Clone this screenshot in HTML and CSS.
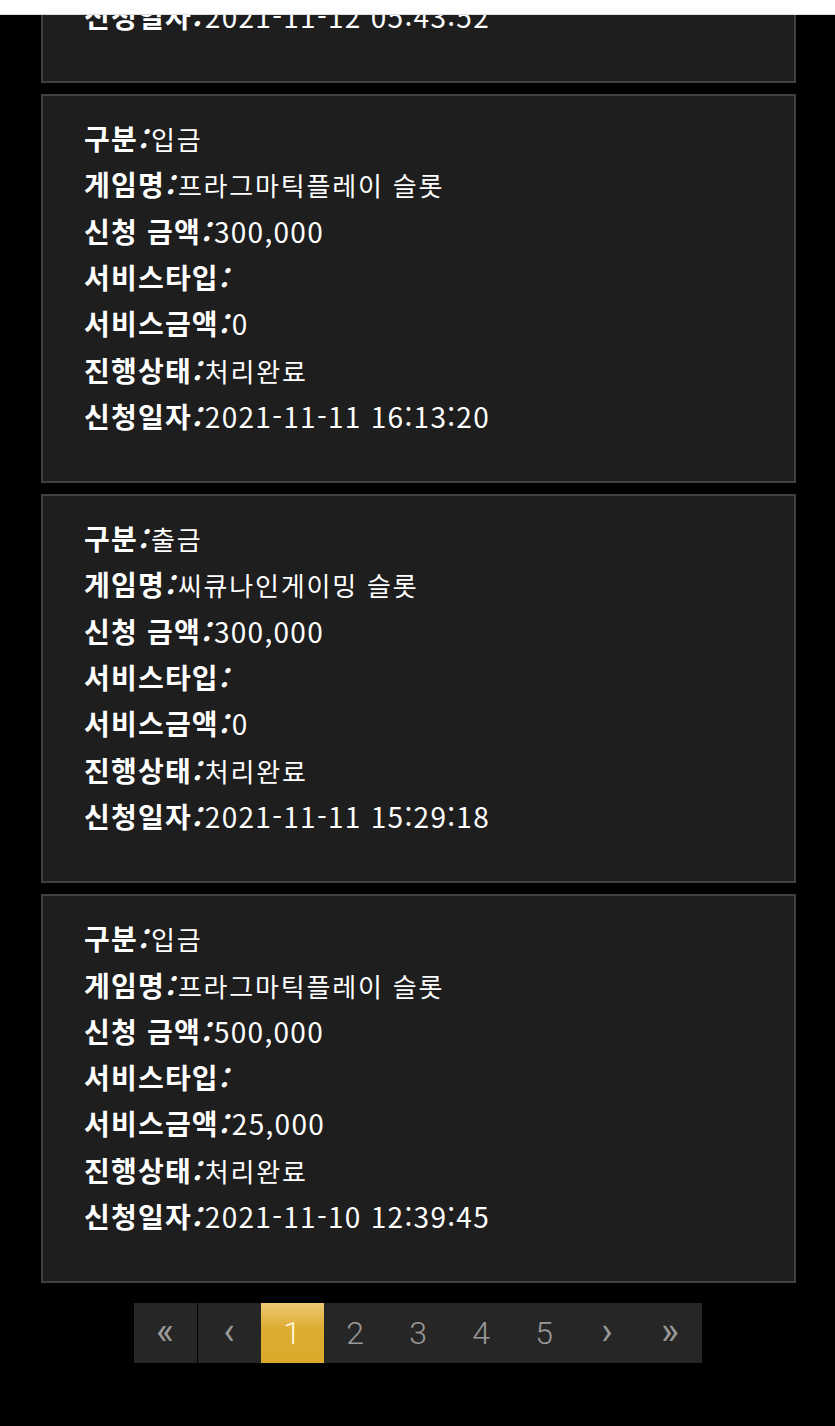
FILE: index.html
```html
<!DOCTYPE html>
<html lang="ko">
<head>
  <meta charset="UTF-8" />
  <meta name="viewport" content="width=device-width, initial-scale=1.0" />
  <title>입출금 내역</title>
  <link rel="stylesheet" href="styles.css">
</head>
<body>
  <div class="top-bar"></div>

  <div class="history">
    <div class="card">
      <p><b>구분<i>:</i></b> <span class="ko">출금</span></p>
      <p><b>게임명<i>:</i></b> <span class="ko">프라그마틱플레이 슬롯</span></p>
      <p><b>신청 금액<i>:</i></b> <span class="v">300,000</span></p>
      <p><b>서비스타입<i>:</i></b></p>
      <p><b>서비스금액<i>:</i></b> <span class="v">0</span></p>
      <p><b>진행상태<i>:</i></b> <span class="ko">처리완료</span></p>
      <p><b>신청일자<i>:</i></b> <span class="v">2021-11-12 05:43:52</span></p>
    </div>

    <div class="card">
      <p><b>구분<i>:</i></b> <span class="ko">입금</span></p>
      <p><b>게임명<i>:</i></b> <span class="ko">프라그마틱플레이 슬롯</span></p>
      <p><b>신청 금액<i>:</i></b> <span class="v">300,000</span></p>
      <p><b>서비스타입<i>:</i></b></p>
      <p><b>서비스금액<i>:</i></b> <span class="v">0</span></p>
      <p><b>진행상태<i>:</i></b> <span class="ko">처리완료</span></p>
      <p><b>신청일자<i>:</i></b> <span class="v">2021-11-11 16:13:20</span></p>
    </div>

    <div class="card">
      <p><b>구분<i>:</i></b> <span class="ko">출금</span></p>
      <p><b>게임명<i>:</i></b> <span class="ko">씨큐나인게이밍 슬롯</span></p>
      <p><b>신청 금액<i>:</i></b> <span class="v">300,000</span></p>
      <p><b>서비스타입<i>:</i></b></p>
      <p><b>서비스금액<i>:</i></b> <span class="v">0</span></p>
      <p><b>진행상태<i>:</i></b> <span class="ko">처리완료</span></p>
      <p><b>신청일자<i>:</i></b> <span class="v">2021-11-11 15:29:18</span></p>
    </div>

    <div class="card">
      <p><b>구분<i>:</i></b> <span class="ko">입금</span></p>
      <p><b>게임명<i>:</i></b> <span class="ko">프라그마틱플레이 슬롯</span></p>
      <p><b>신청 금액<i>:</i></b> <span class="v">500,000</span></p>
      <p><b>서비스타입<i>:</i></b></p>
      <p><b>서비스금액<i>:</i></b> <span class="v">25,000</span></p>
      <p><b>진행상태<i>:</i></b> <span class="ko">처리완료</span></p>
      <p><b>신청일자<i>:</i></b> <span class="v">2021-11-10 12:39:45</span></p>
    </div>
  </div>

  <ul class="pagination">
    <li class="first"><a href="#" class="arrow">&laquo;</a></li>
    <li><a href="#" class="arrow">&lsaquo;</a></li>
    <li class="active"><a href="#">1</a></li>
    <li><a href="#">2</a></li>
    <li><a href="#">3</a></li>
    <li><a href="#">4</a></li>
    <li><a href="#">5</a></li>
    <li><a href="#" class="arrow">&rsaquo;</a></li>
    <li><a href="#" class="arrow">&raquo;</a></li>
  </ul>
</body>
</html>
```

FILE: styles.css
```css
html, body {
  height: 100%;
}

body {
  margin: 0;
  background: #000;
  color: #fff;
  font-family: 'Noto Sans CJK KR', 'Noto Sans', sans-serif;
  overflow: hidden;
}

.top-bar {
  position: fixed;
  top: 0;
  left: 0;
  right: 0;
  height: 14px;
  background: #fff;
  border-bottom: 1px solid #ddd;
  z-index: 10;
}

.history {
  margin: -306px 39px 0 41px;
  display: flex;
  flex-direction: column;
  gap: 11px;
}

.card {
  background: #1e1e1e;
  border: 2px solid #414141;
  padding: 19px 41px 42px;
  font-size: 28px;
}

.card p {
  margin: 0;
  height: 46.3px;
  line-height: 46.3px;
  white-space: nowrap;
}

.card b {
  font-weight: 700;
  letter-spacing: 1.2px;
}

.card b i {
  font-style: italic;
  letter-spacing: 0;
  margin-right: -4px;
}

.card .ko {
  font-size: 26px;
  letter-spacing: 1.8px;
}

.card .v {
  letter-spacing: 1.3px;
}

.pagination {
  list-style: none;
  margin: 20px auto 0;
  padding: 0;
  display: flex;
  justify-content: center;
}

.pagination li {
  width: 63px;
  height: 60px;
  background: #262626;
}

.pagination li.first {
  border-right: 1px solid #000;
}

.pagination a {
  display: flex;
  align-items: center;
  justify-content: center;
  height: 100%;
  color: #999;
  text-decoration: none;
  font-family: 'Roboto', sans-serif;
  font-weight: 300;
  font-size: 32px;
}

.pagination a.arrow {
  font-size: 38px;
  font-weight: 400;
  padding-bottom: 4px;
  box-sizing: border-box;
}

.pagination li.active {
  background: linear-gradient(to bottom, #ecc872, #ddab2e 45%, #dcaa2b);
}

.pagination li.active a {
  color: #fff6d8;
}
```
